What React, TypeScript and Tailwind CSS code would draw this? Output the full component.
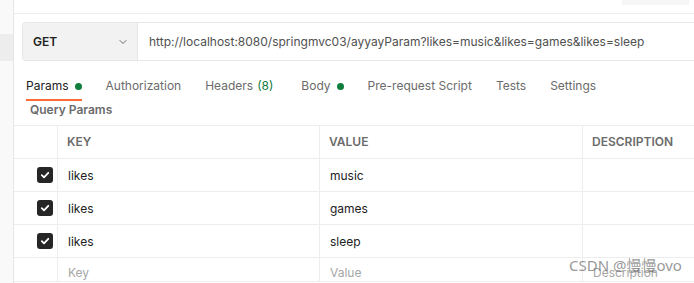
import { useState } from 'react';

const tabs = [
  { label: 'Params', dot: true },
  { label: 'Authorization' },
  { label: 'Headers', count: '(8)' },
  { label: 'Body', dot: true },
  { label: 'Pre-request Script' },
  { label: 'Tests' },
  { label: 'Settings' },
];

const rows = [
  { key: 'likes', value: 'music' },
  { key: 'likes', value: 'games' },
  { key: 'likes', value: 'sleep' },
];

const Check = () => (
  <span className="flex h-[16px] w-[16px] items-center justify-center rounded-[3px] bg-[#262626]">
    <svg width="10" height="10" viewBox="0 0 10 10" fill="none">
      <path d="M1.8 5.2 4 7.3 8.3 2.8" stroke="#fff" strokeWidth="1.8" strokeLinecap="round" strokeLinejoin="round" />
    </svg>
  </span>
);

export default function App() {
  const [active] = useState('Params');

  return (
    <div className="relative flex h-[283px] w-[694px] overflow-hidden bg-white font-['Inter',sans-serif] text-[12px] text-[#212121]">
      {/* left strip */}
      <aside className="w-[14px] shrink-0 border-r border-[#e6e6e6] bg-[#f9f9f9] pt-[34px]">
        <div className="h-[27px] bg-[#ededed]" />
      </aside>

      <main className="flex min-w-0 flex-1 flex-col">
        <div className="flex h-[14px] shrink-0 justify-end border-b border-[#ededed]">
          <div className="mr-[5px] h-[5px] w-[67px] bg-[#f6f6f6]" />
        </div>

        {/* request bar */}
        <div className="ml-[8px] mt-[8px] flex h-[39px] shrink-0 rounded-l-[4px] border border-r-0 border-[#e6e6e6]">
          <div className="flex w-[115px] items-center justify-between rounded-l-[4px] border-r border-[#e6e6e6] bg-[#f2f2f2] pl-[10px] pr-[9px]">
            <span className="font-semibold">GET</span>
            <svg width="10" height="10" viewBox="0 0 10 10" fill="none">
              <path d="M2 3.5 5 6.5 8 3.5" stroke="#6b6b6b" strokeWidth="1" strokeLinecap="round" />
            </svg>
          </div>
          <div className="flex items-center whitespace-nowrap pl-[11px] text-[#505050]">
            http://localhost:8080/springmvc03/ayyayParam?likes=music&amp;likes=games&amp;likes=sleep
          </div>
        </div>

        {/* tabs */}
        <div className="mt-[16px] flex gap-[24px] pl-[12px]">
          {tabs.map((t) => (
            <div
              key={t.label}
              className={`flex items-center pb-[4px] leading-[18px] ${t.count ? 'mr-[4px]' : ''} ${
                t.label === active ? 'border-b-2 border-[#ff6c37] text-[#212121]' : 'border-b-2 border-transparent text-[#6b6b6b]'
              }`}
            >
              {t.label}
              {t.count && <span className="ml-[4px] text-[#0f7d3c]">{t.count}</span>}
              {t.dot && <span className="ml-[6px] h-[7px] w-[7px] rounded-full bg-[#0f7d3c]" />}
            </div>
          ))}
        </div>

        <div className="mt-[1px] pl-[16px] text-[12px] font-semibold leading-[16px] text-[#6b6b6b]">Query Params</div>

        {/* table */}
        <div className="mt-[7px] grid grid-cols-[44px_262px_263px_1fr] border-t border-[#ededed]">
          <div className="h-[33px] border-b border-r border-[#ededed]" />
          <div className="flex h-[33px] items-center border-b border-r border-[#ededed] pl-[9px] font-semibold text-[#6b6b6b]">KEY</div>
          <div className="flex h-[33px] items-center border-b border-r border-[#ededed] pl-[9px] font-semibold text-[#6b6b6b]">VALUE</div>
          <div className="flex h-[33px] items-center border-b border-[#ededed] pl-[9px] font-semibold text-[#6b6b6b]">DESCRIPTION</div>

          {rows.map((r) => (
            <div key={r.value} className="contents">
              <div className="flex h-[33px] items-center justify-end border-b border-r border-[#ededed] pr-[4px]">
                <Check />
              </div>
              <div className="flex h-[33px] items-center border-b border-r border-[#ededed] pl-[10px] pt-[1px]">{r.key}</div>
              <div className="flex h-[33px] items-center border-b border-r border-[#ededed] pl-[10px] pt-[1px]">{r.value}</div>
              <div className="h-[33px] border-b border-[#ededed]" />
            </div>
          ))}

          <div className="h-[24px] border-b border-r border-[#ededed]" />
          <div className="flex h-[24px] items-end border-b border-r border-[#ededed] pb-[1px] pl-[10px] leading-[15px] text-[#a6a6a6]">Key</div>
          <div className="flex h-[24px] items-end border-b border-r border-[#ededed] pb-[1px] pl-[10px] leading-[15px] text-[#a6a6a6]">Value</div>
          <div className="flex h-[24px] items-end border-b border-[#ededed] pb-[1px] pl-[10px] leading-[15px] text-[#a6a6a6]">Description</div>
        </div>
      </main>

      <div className="absolute left-[569px] top-[255px] font-['Noto_Sans','Noto_Sans_CJK_SC',sans-serif] text-[15px] leading-[20px] text-[#6a6a6a]/70">
        CSDN @慢慢ovo
      </div>
    </div>
  );
}
